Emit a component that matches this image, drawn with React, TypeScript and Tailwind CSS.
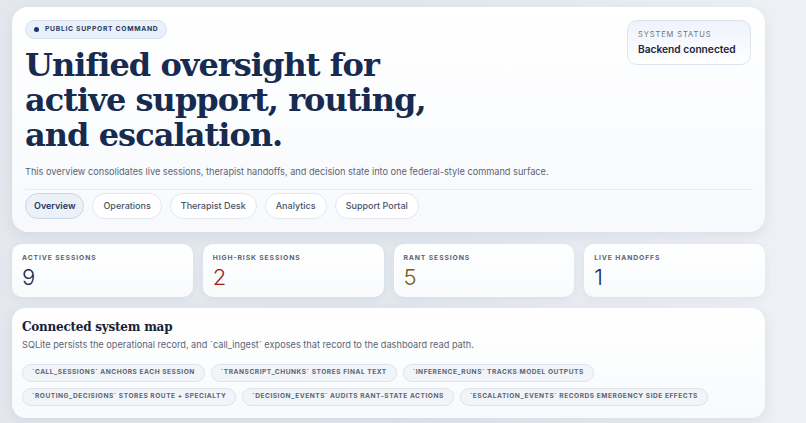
import React from 'react';

const tabs = ['Overview', 'Operations', 'Therapist Desk', 'Analytics', 'Support Portal'];

const stats = [
  { label: 'Active sessions', value: '9', color: 'text-[#1d2b52]' },
  { label: 'High-risk sessions', value: '2', color: 'text-[#9a1f1f]' },
  { label: 'Rant sessions', value: '5', color: 'text-[#7b5a16]' },
  { label: 'Live handoffs', value: '1', color: 'text-[#1d2b52]' },
];

const chipsTop = [
  '`call_sessions` anchors each session',
  '`transcript_chunks` stores final text',
  '`inference_runs` tracks model outputs',
];
const chipsBottom = [
  '`routing_decisions` stores route + specialty',
  '`decision_events` audits rant-state actions',
  '`escalation_events` records emergency side effects',
];

const serif = { fontFamily: '"DejaVu Serif", "Liberation Serif", serif' };

function Chip({ text }: { text: string }) {
  return (
    <span className="h-[18px] px-[9px] flex items-center rounded-full border border-[#dfe4eb] bg-[#f1f4f8] text-[6.6px] font-bold uppercase tracking-[0.08em] text-[#5d6573] whitespace-nowrap">
      {text}
    </span>
  );
}

export default function App() {
  return (
    <div
      className="w-[806px] h-[423px] overflow-hidden bg-gradient-to-r from-[#e4e8ee] via-[#e3e8ef] to-[#eef1f5] pt-[7px] pl-[12px]"
      style={{ fontFamily: 'Inter, "Noto Sans", sans-serif' }}
    >
      <div className="w-[753px] flex flex-col">
        {/* hero */}
        <section className="rounded-[16px] bg-gradient-to-b from-white to-[#f7f9fc] shadow-[0_4px_14px_rgba(30,45,80,0.08)] px-[13px] pt-[13px] pb-[13px]">
          <div className="flex justify-between items-start">
            <div className="flex flex-col items-start">
              <span className="flex items-center gap-[6px] h-[19px] px-[8px] rounded-full bg-[#eaf0f9] border border-[#d6e0ee] text-[6.8px] font-bold tracking-[0.1em] text-[#2b3a5c]">
                <span className="w-[5px] h-[5px] rounded-full bg-[#1f3363]" />
                PUBLIC SUPPORT COMMAND
              </span>
              <h1
                className="mt-[9px] text-[32px] leading-[35px] font-bold text-[#172a4f] tracking-[-0.03em]"
                style={serif}
              >
                Unified oversight for
                <br />
                active support, routing,
                <br />
                and escalation.
              </h1>
            </div>
            <div className="mr-[1px] w-[124px] h-[45px] rounded-[10px] border border-[#dce4ef] bg-gradient-to-b from-[#eef3fb] to-white px-[10px] pt-[9px]">
              <div className="text-[7.5px] leading-[10px] tracking-[0.12em] text-[#6b7383]">SYSTEM STATUS</div>
              <div className="mt-[3px] text-[10.2px] leading-[13px] font-semibold text-[#1b2437]">Backend connected</div>
            </div>
          </div>
          <p className="mt-[12px] text-[9.2px] leading-[14px] text-[#5c6575]">
            This overview consolidates live sessions, therapist handoffs, and decision state into one federal-style command surface.
          </p>
          <div className="mt-[10px] border-t border-[#e8ecf2] pt-[3px] flex gap-[8px]">
            {tabs.map((t, i) => (
              <span
                key={t}
                className={
                  i === 0
                    ? 'h-[26px] px-[8px] flex items-center rounded-full border border-[#cbd6e6] bg-[#ecf1f9] text-[9px] font-semibold text-[#23345a]'
                    : 'h-[26px] px-[10px] flex items-center rounded-full border border-[#e3e8ef] bg-white text-[9px] font-medium text-[#4a5365]'
                }
              >
                {t}
              </span>
            ))}
          </div>
        </section>

        {/* stats */}
        <div className="mt-[12px] grid grid-cols-4 gap-[10px]">
          {stats.map((s) => (
            <div
              key={s.label}
              className="h-[53px] rounded-[10px] bg-gradient-to-b from-white to-[#f8fafc] shadow-[0_2px_8px_rgba(30,45,80,0.06)] px-[10px] pt-[9px]"
            >
              <div className="text-[6.8px] leading-[9px] font-bold uppercase tracking-[0.13em] text-[#5a6272]">{s.label}</div>
              <div className={`mt-[3px] text-[22px] leading-[24px] font-light ${s.color}`}>{s.value}</div>
            </div>
          ))}
        </div>

        {/* system map */}
        <section className="mt-[11px] rounded-[14px] bg-gradient-to-b from-white to-[#f8fafc] shadow-[0_4px_14px_rgba(30,45,80,0.08)] px-[10px] pt-[10px] pb-[12px]">
          <h2 className="text-[12px] leading-[18px] font-bold text-[#172238] tracking-[-0.02em]" style={serif}>
            Connected system map
          </h2>
          <p className="mt-[2px] text-[9.2px] leading-[14px] text-[#5c6575]">
            SQLite persists the operational record, and `call_ingest` exposes that record to the dashboard read path.
          </p>
          <div className="mt-[12px] flex flex-col gap-[6px]">
            <div className="flex gap-[6px]">
              {chipsTop.map((c) => (
                <Chip key={c} text={c} />
              ))}
            </div>
            <div className="flex gap-[6px]">
              {chipsBottom.map((c) => (
                <Chip key={c} text={c} />
              ))}
            </div>
          </div>
        </section>
      </div>
    </div>
  );
}
